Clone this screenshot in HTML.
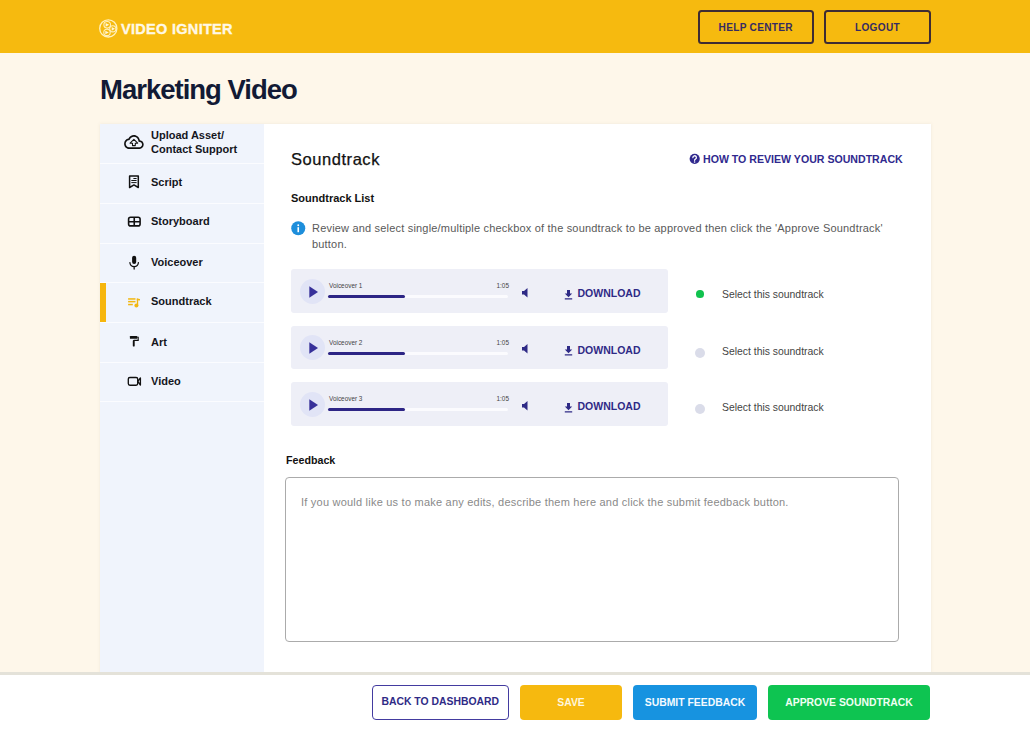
<!DOCTYPE html>
<html><head><meta charset="utf-8">
<style>
*{margin:0;padding:0;box-sizing:border-box}
html,body{width:1030px;height:729px;overflow:hidden}
body{background:#FEF7EA;font-family:"Liberation Sans",sans-serif;position:relative;color:#111}
.abs{position:absolute}
#hdr{position:absolute;left:0;top:0;width:1030px;height:53px;background:#F6BA0F}
.logo-t{position:absolute;left:121px;top:21px;font-size:14.5px;font-weight:bold;color:#FFF8E6;letter-spacing:0.3px;white-space:nowrap;-webkit-text-stroke:0.35px #FFF8E6}
.hbtn{position:absolute;top:10px;height:34px;border:2px solid #3E2C33;border-radius:3.5px;font-size:10.1px;font-weight:bold;color:#362B62;text-align:center;line-height:32px;letter-spacing:0.3px}
h1{position:absolute;left:100px;top:74px;font-size:27.5px;letter-spacing:-1px;font-weight:bold;color:#121A35;white-space:nowrap}
#card{position:absolute;left:100px;top:124px;width:831px;height:600px;background:#fff;box-shadow:0 0 3px rgba(170,165,150,0.18)}
#side{position:absolute;left:100px;top:124px;width:164px;height:600px;background:#F0F4FC}
.item{position:absolute;left:0;width:164px;border-bottom:1.5px solid #FBFCFF}
.item .t{position:absolute;left:51px;font-size:11px;font-weight:bold;color:#15161C;white-space:nowrap}
.item svg{position:absolute}
.st{font-size:11px;font-weight:bold;color:#15161C;line-height:13px}
.sel-bar{position:absolute;left:0;width:6px;background:#F6B60E}
.tx{position:absolute;white-space:nowrap}
.player{position:absolute;left:291px;width:377px;height:43.5px;background:#EEEFF7;border-radius:3px}
.play{position:absolute;left:9px;top:9.5px;width:25px;height:25px;border-radius:50%;background:#E1E4F6}
.vlabel{position:absolute;left:38px;top:13px;font-size:6.4px;color:#444}
.vtime{position:absolute;left:205.5px;top:13px;font-size:6.4px;color:#444}
.track{position:absolute;left:37px;top:26px;width:180px;height:3px;border-radius:2px;background:#FBFBFE}
.prog{position:absolute;left:37px;top:26px;width:77px;height:3px;border-radius:2px;background:#2D2585}
.dl{position:absolute;left:286.5px;top:18px;font-size:10.5px;font-weight:bold;color:#2E2A86;letter-spacing:0}
.radio{position:absolute;left:696px;width:8px;height:8px;border-radius:50%}
.rtxt{position:absolute;left:722px;font-size:10.4px;color:#444;white-space:nowrap}
#bar{position:absolute;left:0;top:672px;width:1030px;height:57px;background:#fff;border-top:3px solid #E4E2D9}
.bbtn{position:absolute;top:685px;height:34.5px;border-radius:4px;font-size:10.4px;font-weight:bold;text-align:center;line-height:36px;letter-spacing:0;white-space:nowrap}
</style></head><body>
<div id="hdr">
  <svg class="abs" style="left:0;top:0" width="250" height="53" viewBox="0 0 250 53">
    <circle cx="108.3" cy="28.4" r="8.6" fill="none" stroke="#FFF1BE" stroke-width="1.3"/>
    <g fill="none" stroke="#FFF1BE" stroke-width="1.1">
      <circle cx="107.2" cy="24.8" r="3.3"/>
      <circle cx="112.8" cy="28.8" r="3.1"/>
      <circle cx="107" cy="32.4" r="3.2"/>
    </g>
    <path d="M105.6 22.9 L109.2 24.8 L105.6 26.7Z M111.7 27 L115 28.85 L111.7 30.7Z M105.3 30.8 L108.9 32.5 L105.3 34.3Z" fill="#FFF6D8"/>
  </svg>
  <div class="logo-t">VIDEO IGNITER</div>
  <div class="hbtn" style="left:698px;width:115.5px">HELP CENTER</div>
  <div class="hbtn" style="left:824px;width:107px">LOGOUT</div>
</div>
<h1>Marketing Video</h1>
<div id="card"></div>
<div id="side">
  <div class="item" style="top:0;height:39.5px"></div>
  <div class="item" style="top:39.5px;height:40px"></div>
  <div class="item" style="top:79.5px;height:40px"></div>
  <div class="item" style="top:119.5px;height:39.5px"></div>
  <div class="item" style="top:159px;height:39.5px"></div>
  <div class="item" style="top:198.5px;height:40px"></div>
  <div class="item" style="top:238.5px;height:39.5px"></div>
  <div class="sel-bar" style="top:159px;height:38.5px"></div>
</div>
<div class="tx st" style="left:151px;top:129px;line-height:13.5px">Upload Asset/<br>Contact Support</div>
<div class="tx st" style="left:151px;top:176px">Script</div>
<div class="tx st" style="left:151px;top:215px">Storyboard</div>
<div class="tx st" style="left:151px;top:256px">Voiceover</div>
<div class="tx st" style="left:151px;top:295px">Soundtrack</div>
<div class="tx st" style="left:151px;top:336px">Art</div>
<div class="tx st" style="left:151px;top:375px">Video</div>
<svg class="abs" style="left:0;top:0" width="1030" height="729" viewBox="0 0 1030 729">
  <path transform="translate(124.1,131.4) scale(0.817,0.875)" fill="#111" d="M19.35 10.04C18.67 6.59 15.64 4 12 4 9.11 4 6.6 5.64 5.35 8.04 2.34 8.36 0 10.91 0 14c0 3.31 2.69 6 6 6h13c2.76 0 5-2.24 5-5 0-2.64-2.05-4.78-4.65-4.96zM19 18H6c-2.21 0-4-1.79-4-4 0-2.05 1.53-3.76 3.56-3.97l1.07-.11.5-.95C8.08 7.14 9.94 6 12 6c2.62 0 4.88 1.86 5.39 4.43l.3 1.5 1.53.11c1.56.1 2.78 1.41 2.78 2.96 0 1.65-1.35 3-3 3z"/>
  <path d="M133.9 139.4 L137.7 143.2 H135.3 V145.6 H132.5 V143.2 H130.1Z" fill="none" stroke="#111" stroke-width="1.05" stroke-linejoin="round"/>
  <g fill="none" stroke="#111" stroke-width="1.5" stroke-linejoin="round">
    <path d="M129.6 175.9 H138.3 V187.5 L133.95 184.9 L129.6 187.5Z"/>
    <path d="M133.4 178.5 H136.6 M131.3 180.5 H136.6 M131.3 182.6 H136.6" stroke-width="1"/>
  </g>
  <g fill="none" stroke="#111" stroke-width="1.6">
    <rect x="128.6" y="217.3" width="11.5" height="8.6" rx="2"/>
    <path d="M134.25 217.2 V225.8 M128.5 221.8 H140"/>
  </g>
  <rect x="132.1" y="255.8" width="4.1" height="8.2" rx="2.05" fill="#111"/>
  <path d="M129.9 262.6 A4.25 4 0 0 0 138.4 262.6 M134.15 266.6 V269" fill="none" stroke="#111" stroke-width="1.3" stroke-linecap="round"/>
  <g fill="#F2B711">
    <rect x="128.1" y="298.2" width="7.4" height="1.5"/>
    <rect x="128.1" y="300.9" width="7.4" height="1.5"/>
    <rect x="128.1" y="303.8" width="4.7" height="1.5"/>
    <rect x="136.8" y="298.6" width="1.4" height="7"/>
    <path d="M136.8 298.4 L140 299 V300.4 L136.8 300.2Z"/>
    <circle cx="136.4" cy="305.6" r="2"/>
  </g>
  <g fill="#111">
    <rect x="129.9" y="335.9" width="7.4" height="2.9" rx="0.6"/>
    <rect x="132.8" y="340" width="1.9" height="6.6" rx="0.9"/>
  </g>
  <path d="M137.2 337.3 H138.2 V340.4 H133.7" fill="none" stroke="#111" stroke-width="1.1"/>
  <g fill="none" stroke="#111" stroke-width="1.35" stroke-linejoin="round">
    <rect x="128.3" y="377.5" width="9.4" height="7.7" rx="1.6"/>
    <path d="M137.7 381.4 L140.4 378 V385 Z"/>
  </g>
</svg>

<div class="tx" style="left:291px;top:150px;font-size:16.5px;color:#121212;letter-spacing:0.55px;-webkit-text-stroke:0.25px #121212">Soundtrack</div>
<div class="tx" id="link" style="left:703px;top:153px;font-size:10.6px;font-weight:bold;color:#30298E;letter-spacing:0">HOW TO REVIEW YOUR SOUNDTRACK</div>
<svg class="abs" style="left:688.5px;top:153px" width="12" height="12" viewBox="0 0 12 12"><circle cx="5.7" cy="5.8" r="5.1" fill="#30298E"/><path d="M3.9 4.6 A1.75 1.75 0 1 1 6.4 6.1 C5.8 6.4 5.6 6.7 5.6 7.3" fill="none" stroke="#fff" stroke-width="1.3" stroke-linecap="round"/><circle cx="5.6" cy="9" r="0.8" fill="#fff"/></svg>
<div class="tx" style="left:291px;top:192px;font-size:11px;font-weight:bold;color:#121212">Soundtrack List</div>
<svg class="abs" style="left:290.5px;top:220.5px" width="15" height="15" viewBox="0 0 15 15"><circle cx="7.25" cy="7.25" r="7" fill="#1D8EDB"/><rect x="6.45" y="6.2" width="1.6" height="5" fill="#fff"/><circle cx="7.25" cy="4.3" r="0.95" fill="#fff"/></svg>
<div class="tx" id="info" style="left:312px;top:220px;font-size:11px;color:#595959;line-height:16px;width:590px;white-space:normal;letter-spacing:0.19px">Review and select single/multiple checkbox of the soundtrack to be approved then click the 'Approve Soundtrack' button.</div>
<div class="player" style="top:269px">
  <div class="play"></div>
  <svg class="abs" style="left:18px;top:16.5px" width="10" height="12" viewBox="0 0 10 12"><path d="M0.3 0.3 L9 6 L0.3 11.7Z" fill="#37309A"/></svg>
  <div class="vlabel">Voiceover 1</div><div class="vtime">1:05</div>
  <div class="track"></div><div class="prog"></div>
  <svg class="abs" style="left:231px;top:18.5px" width="6" height="10" viewBox="0 0 6 10"><path d="M0 3 H2 L5.5 0 V9.5 L2 6.5 H0Z" fill="#2E2A86"/></svg>
  <svg class="abs" style="left:273px;top:20.5px" width="9" height="10" viewBox="0 0 9 10"><path d="M3 0 H6 V3.6 H8.2 L4.5 7.2 L0.8 3.6 H3Z M0.8 8.3 H8.2 V9.4 H0.8Z" fill="#2E2A86"/></svg>
  <div class="dl">DOWNLOAD</div>
</div>
<div class="player" style="top:325.5px">
  <div class="play"></div>
  <svg class="abs" style="left:18px;top:16.5px" width="10" height="12" viewBox="0 0 10 12"><path d="M0.3 0.3 L9 6 L0.3 11.7Z" fill="#37309A"/></svg>
  <div class="vlabel">Voiceover 2</div><div class="vtime">1:05</div>
  <div class="track"></div><div class="prog"></div>
  <svg class="abs" style="left:231px;top:18.5px" width="6" height="10" viewBox="0 0 6 10"><path d="M0 3 H2 L5.5 0 V9.5 L2 6.5 H0Z" fill="#2E2A86"/></svg>
  <svg class="abs" style="left:273px;top:20.5px" width="9" height="10" viewBox="0 0 9 10"><path d="M3 0 H6 V3.6 H8.2 L4.5 7.2 L0.8 3.6 H3Z M0.8 8.3 H8.2 V9.4 H0.8Z" fill="#2E2A86"/></svg>
  <div class="dl">DOWNLOAD</div>
</div>
<div class="player" style="top:382px">
  <div class="play"></div>
  <svg class="abs" style="left:18px;top:16.5px" width="10" height="12" viewBox="0 0 10 12"><path d="M0.3 0.3 L9 6 L0.3 11.7Z" fill="#37309A"/></svg>
  <div class="vlabel">Voiceover 3</div><div class="vtime">1:05</div>
  <div class="track"></div><div class="prog"></div>
  <svg class="abs" style="left:231px;top:18.5px" width="6" height="10" viewBox="0 0 6 10"><path d="M0 3 H2 L5.5 0 V9.5 L2 6.5 H0Z" fill="#2E2A86"/></svg>
  <svg class="abs" style="left:273px;top:20.5px" width="9" height="10" viewBox="0 0 9 10"><path d="M3 0 H6 V3.6 H8.2 L4.5 7.2 L0.8 3.6 H3Z M0.8 8.3 H8.2 V9.4 H0.8Z" fill="#2E2A86"/></svg>
  <div class="dl">DOWNLOAD</div>
</div>
<div class="radio" style="top:290.2px;left:695.9px;width:7.7px;height:7.7px;background:#10C24E"></div>
<div class="radio" style="top:347.6px;left:694.8px;width:10px;height:10px;background:#DADCE9"></div>
<div class="radio" style="top:403.5px;left:694.8px;width:10px;height:10px;background:#DADCE9"></div>
<div class="rtxt" style="top:289px">Select this soundtrack</div>
<div class="rtxt" style="top:345.5px">Select this soundtrack</div>
<div class="rtxt" style="top:402px">Select this soundtrack</div>
<div class="tx" style="left:286px;top:454px;font-size:10.7px;font-weight:bold;color:#121212">Feedback</div>
<div class="abs" style="left:285px;top:477px;width:614px;height:165px;border:1px solid #ABABAB;border-radius:4px;background:#fff"></div>
<div class="tx" style="left:302px;top:496px;font-size:11px;color:#8A8A8A;letter-spacing:0.22px;margin-left:-1px">If you would like us to make any edits, describe them here and click the submit feedback button.</div>
<div id="bar"></div>
<div class="bbtn" style="left:371.5px;width:137.5px;border:1.8px solid #433BA0;color:#2F2A86;line-height:32px">BACK TO DASHBOARD</div>
<div class="bbtn" style="left:520px;width:102px;background:#F6B90F;color:#FFF6DA">SAVE</div>
<div class="bbtn" style="left:633px;width:124px;background:#1793E0;color:#F4FAFF">SUBMIT FEEDBACK</div>
<div class="bbtn" style="left:768px;width:162px;background:#0EC451;color:#EFFFF3">APPROVE SOUNDTRACK</div>
</body></html>
